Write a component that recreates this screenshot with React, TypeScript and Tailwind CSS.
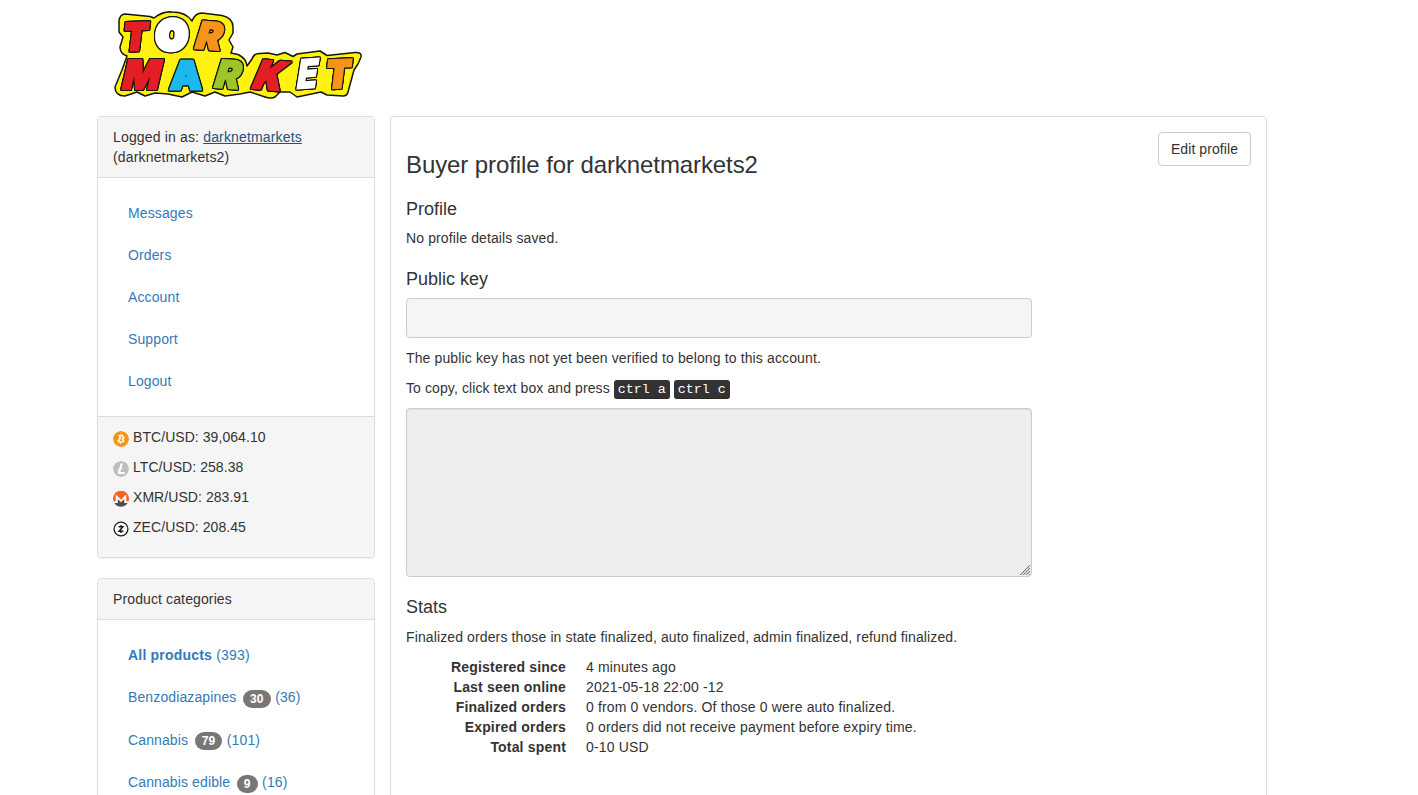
import React from "react";
import { SiBitcoin, SiLitecoin } from "react-icons/si";

type Letter = { ch: string; x: number; y: number; size: number; sx: number; tilt: number; skew: number; fill: string; weight: number };

const letters: Letter[] = [
  { ch: "T", x: 17.5, y: 43.5, size: 37, sx: 0.94, tilt: -2, skew: -9, fill: "#e31e25", weight: 2.8 },
  { ch: "O", x: 51, y: 42, size: 39, sx: 1, tilt: 0, skew: -3, fill: "#ffffff", weight: 6 },
  { ch: "R", x: 88.5, y: 41, size: 37, sx: 1.02, tilt: 4, skew: -13, fill: "#f7931a", weight: 2.2 },
  { ch: "M", x: 15.5, y: 81.5, size: 40, sx: 0.98, tilt: 0, skew: -13, fill: "#e31e25", weight: 2 },
  { ch: "A", x: 65, y: 81.5, size: 38, sx: 1.03, tilt: 0, skew: -3, fill: "#1cb8ee", weight: 3 },
  { ch: "R", x: 107.5, y: 80, size: 38, sx: 0.98, tilt: 4, skew: -13, fill: "#9cc627", weight: 2 },
  { ch: "K", x: 146, y: 80.5, size: 38, sx: 0.96, tilt: 5, skew: -18, fill: "#e31e25", weight: 3 },
  { ch: "E", x: 190.5, y: 82, size: 40, sx: 0.83, tilt: -4, skew: -13, fill: "#ffffff", weight: 1.4 },
  { ch: "T", x: 220, y: 81, size: 37.5, sx: 0.93, tilt: -2, skew: -9, fill: "#f7931a", weight: 2.8 },
];

function Logo() {
  return (
    <svg width="260" height="100" viewBox="0 0 260 100" className="block" aria-label="Tor Market">
      <path
        d="M14 14Q15 7 20 7L45 9.5L49 11Q58 4 67 5Q81 5 87 14Q90 6 97 6L117 8.5Q128 11 128 20V26L124 33L128 40L126 46L133 47.5Q141 51 142 59L147 52Q149 46 155 46.5L163 46L172 48L180 45.5L188 49.5L192 47L215 44L222 48.5L250 45.5Q257 45 256 50L253 57L249 63L243 85Q242 89 238 89L222 88L216 85L192 90L185 85H175L170 90Q166 92 160 90L145 85L135 87L120 89L110 85L100 89L87 85L77 90L63 87L50 86L40 89L32 85L20 89Q10 89 10 80L17 63L22 49Q15 47 15 40L18 30L14 25Z"
        fill="#fff20d" stroke="#161610" strokeWidth="1.5" strokeLinejoin="round"
      />
      <g className="[filter:drop-shadow(1px_0_#161610)_drop-shadow(-1px_0_#161610)_drop-shadow(0_1px_#161610)_drop-shadow(0_-1px_#161610)]">
        {letters.map((l, i) => (
          <text
            key={i}
            transform={`translate(${l.x} ${l.y}) rotate(${l.tilt}) skewX(${l.skew}) scale(${l.sx} 1)`}
            fontFamily="Inter, 'Liberation Sans', sans-serif"
            fontWeight="900"
            fontSize={l.size}
            fill={l.fill}
            stroke={l.fill}
            strokeWidth={l.weight}
          >
            {l.ch}
          </text>
        ))}
      </g>
    </svg>
  );
}

function Monero() {
  return (
    <svg width="16" height="16" viewBox="0 0 16 16">
      <circle cx="8" cy="8" r="8" fill="#fff" />
      <path d="M.4 10.2A8 8 0 1 1 15.6 10.2H13.2V3.6L8 8.8L2.8 3.6V10.2Z" fill="#f26822" />
      <path d="M1.2 12H4.8V8L8 11.2L11.2 8V12H14.8A8 8 0 0 1 1.2 12Z" fill="#4d4d4d" />
    </svg>
  );
}

function Zcash() {
  return (
    <svg width="16" height="16" viewBox="0 0 16 16" fill="none" stroke="#1d1d1d">
      <circle cx="8" cy="8" r="6.9" strokeWidth="1.3" fill="#fafafa" />
      <path d="M5.6 5.7H9.8L6.2 10.3H10.4" strokeWidth="1.6" />
      <path d="M8 4V5.5M8 10.5V12" strokeWidth="1.3" />
    </svg>
  );
}

const rates = [
  { label: "BTC/USD: 39,064.10", icon: <SiBitcoin size={16} color="#f7931a" className="rounded-full bg-white" /> },
  { label: "LTC/USD: 258.38", icon: <SiLitecoin size={16} color="#bebebe" className="rounded-full bg-white" /> },
  { label: "XMR/USD: 283.91", icon: <Monero /> },
  { label: "ZEC/USD: 208.45", icon: <Zcash /> },
];

const categories = [
  { name: "Benzodiazapines", badge: 30, count: 36 },
  { name: "Cannabis", badge: 79, count: 101 },
  { name: "Cannabis edible", badge: 9, count: 16 },
];

const stats = [
  ["Registered since", "4 minutes ago"],
  ["Last seen online", "2021-05-18 22:00 -12"],
  ["Finalized orders", "0 from 0 vendors. Of those 0 were auto finalized."],
  ["Expired orders", "0 orders did not receive payment before expiry time."],
  ["Total spent", "0-10 USD"],
];

function Kbd({ children }: { children: React.ReactNode }) {
  return (
    <kbd className="rounded-[3px] bg-[#333] px-1 py-0.5 font-['Liberation_Mono',monospace] text-[13.33px] leading-5 tracking-normal text-white shadow-[inset_0_-1px_0_rgba(0,0,0,0.25)]">
      {children}
    </kbd>
  );
}

export default function App() {
  return (
    <div className="h-[795px] overflow-hidden bg-white pl-[97px] font-['Liberation_Sans',Arial,sans-serif] text-sm tracking-[0.12px] text-[#333]">
      <header className="h-[116px] pt-[7px] pl-2">
        <Logo />
      </header>
      <div className="flex items-start gap-[15px]">
        <aside className="flex w-[278px] flex-col gap-5">
          <section className="overflow-hidden rounded border border-[#ddd] bg-white shadow-[0_1px_1px_rgba(0,0,0,0.05)]">
            <div className="border-b border-[#ddd] bg-[#f5f5f5] px-[15px] py-2.5 tracking-[0.16px]">
              Logged in as: <a className="text-[#23527c] underline">darknetmarkets</a>
              <br />
              (darknetmarkets2)
            </div>
            <nav className="flex flex-col gap-0.5 p-[15px] text-[#337ab7]">
              {["Messages", "Orders", "Account", "Support", "Logout"].map((n) => (
                <a key={n} className="px-[15px] py-2.5">{n}</a>
              ))}
            </nav>
            <div className="flex flex-col gap-2.5 border-t border-[#ddd] bg-[#f5f5f5] pt-2.5 pb-5 pl-[15px] tracking-[0.06px]">
              {rates.map((r) => (
                <div key={r.label} className="flex h-5 gap-1">
                  <span className="mt-1">{r.icon}</span>
                  {r.label}
                </div>
              ))}
            </div>
          </section>
          <section className="rounded border border-[#ddd] bg-white">
            <div className="rounded-t-[3px] border-b border-[#ddd] bg-[#f5f5f5] px-[15px] py-2.5">Product categories</div>
            <nav className="flex flex-col gap-0.5 p-[15px] text-[#337ab7]">
              <a className="px-[15px] py-2.5 tracking-[0.2px]"><b>All products</b> (393)</a>
              {categories.map((c) => (
                <a key={c.name} className="flex h-[40.55px] px-[15px] py-2.5">
                  {c.name}
                  <span className="mt-[2.9px] mr-[4.6px] ml-[6.5px] h-[18px] rounded-[10px] bg-[#777] px-[7px] text-xs leading-[18px] font-bold text-white">{c.badge}</span>
                  ({c.count})
                </a>
              ))}
            </nav>
          </section>
        </aside>
        <main className="h-[760px] w-[877px] rounded border border-[#ddd] bg-white p-[15px] shadow-[0_1px_1px_rgba(0,0,0,0.05)]">
          <div className="flex items-start justify-between">
            <h3 className="pt-5 text-2xl leading-[26.4px] tracking-[-0.09px]">Buyer profile for darknetmarkets2</h3>
            <button className="w-[93px] rounded border border-[#ccc] py-1.5 leading-5 tracking-[0.08px]">Edit profile</button>
          </div>
          <h4 className="mt-[22px] text-lg leading-[19.8px] tracking-normal">Profile</h4>
          <p className="mt-2">No profile details saved.</p>
          <h4 className="mt-[22px] text-lg leading-[19.8px] tracking-normal">Public key</h4>
          <div className="mt-[7.6px] h-10 w-[626px] rounded border border-[#ccc] bg-[#f5f5f5]" />
          <p className="mt-2.5 tracking-[0.13px]">The public key has not yet been verified to belong to this account.</p>
          <p className="mt-2.5 h-5 tracking-[0.1px]">
            To copy, click text box and press <Kbd>ctrl a</Kbd> <Kbd>ctrl c</Kbd>
          </p>
          <div className="relative mt-2.5 w-[626px]">
            <textarea readOnly className="block h-[169px] w-full resize-none rounded border border-[#ccc] bg-[#eee] shadow-[inset_0_1px_1px_rgba(0,0,0,0.075)]" />
            <svg width="11" height="11" viewBox="0 0 11 11" className="absolute right-[2px] bottom-[1px]" shapeRendering="crispEdges">
              <path d="M.5 10.5L10.5 .5M3.5 10.5L10.5 3.5M6.5 10.5L10.5 6.5M9.5 10.5L10.5 9.5" stroke="#777" />
              <path d="M1.5 10.5L10.5 1.5M4.5 10.5L10.5 4.5M7.5 10.5L10.5 7.5" stroke="#c8c8c8" />
            </svg>
          </div>
          <h4 className="mt-[21px] text-lg leading-[19.8px] tracking-normal">Stats</h4>
          <p className="mt-[9.2px]">Finalized orders those in state finalized, auto finalized, admin finalized, refund finalized.</p>
          <dl className="mt-2.5 grid grid-cols-[160px_1fr] gap-x-5 tracking-[0.15px]">
            {stats.map(([k, v]) => (
              <React.Fragment key={k}>
                <dt className="text-right font-bold tracking-[0.18px]">{k}</dt>
                <dd>{v}</dd>
              </React.Fragment>
            ))}
          </dl>
        </main>
      </div>
    </div>
  );
}
